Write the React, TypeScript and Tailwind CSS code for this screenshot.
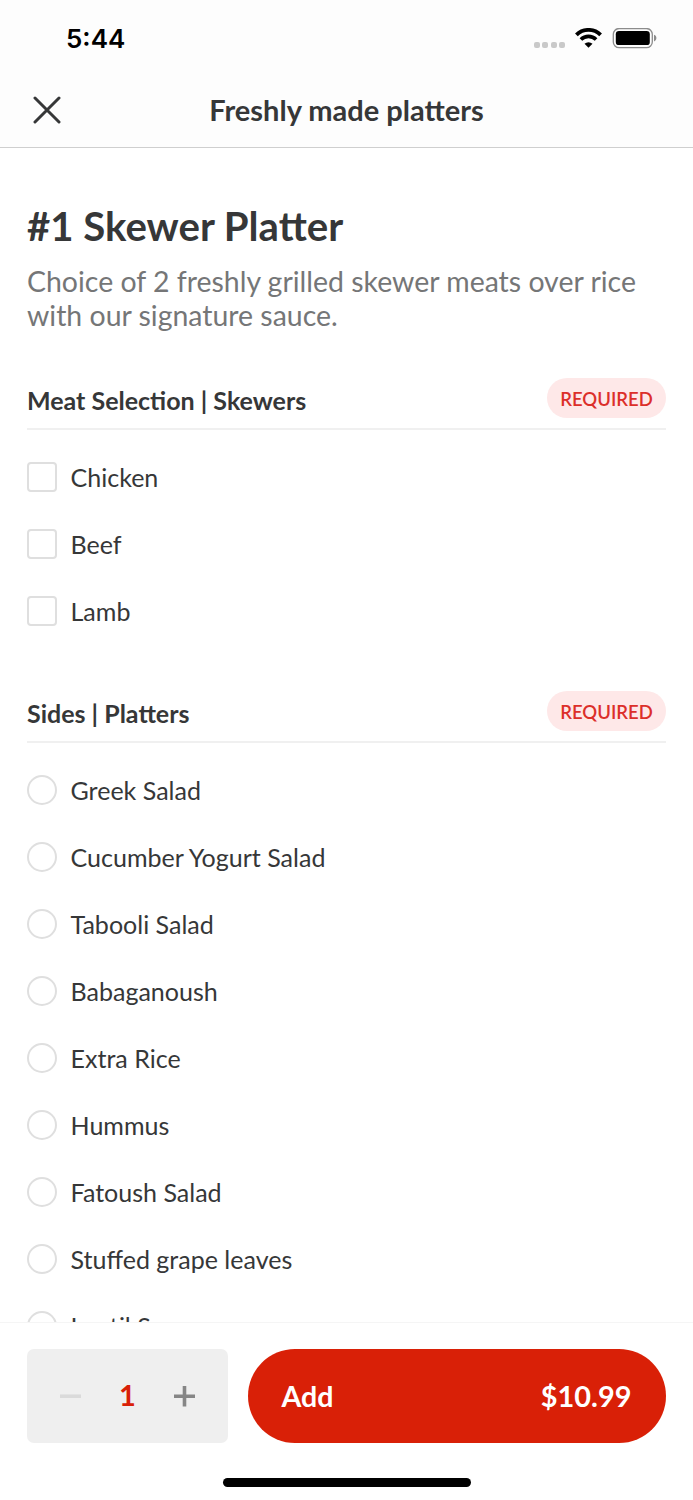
import React from "react";

const meats = ["Chicken", "Beef", "Lamb"];
const sides = [
  "Greek Salad",
  "Cucumber Yogurt Salad",
  "Tabooli Salad",
  "Babaganoush",
  "Extra Rice",
  "Hummus",
  "Fatoush Salad",
  "Stuffed grape leaves",
  "Lentil Soup",
];

function StatusBar() {
  return (
    <div className="flex h-[76px] items-center justify-between pr-[36px] pl-[66px]">
      <span className="mt-[2px] font-['Inter',sans-serif] text-[26px] leading-none font-semibold text-black">5:44</span>
      <div className="flex items-center">
        <div className="mt-[14px] mr-[10px] flex gap-[2.4px]">
          {[0, 1, 2, 3].map((i) => (
            <span key={i} className="size-[6px] rounded-[2px] bg-[#c9c9c9]" />
          ))}
        </div>
        <svg className="mr-[10px] h-[20px] w-[27px]" viewBox="0 0 27 20" fill="none">
          <path d="M1.4 6.8A17.4 17.4 0 0 1 25.6 6.8" stroke="#000" strokeWidth="3.9" />
          <path d="M5.9 11.5A10.9 10.9 0 0 1 21.1 11.5" stroke="#000" strokeWidth="3.7" />
          <path d="M13.5 19.7L9.5 15.7A6 6 0 0 1 17.5 15.7Z" fill="#000" />
        </svg>
        <svg className="h-[21px] w-[45px]" viewBox="0 0 45 21" fill="none">
          <rect x="1.3" y="0.5" width="39" height="19.2" rx="5.8" stroke="#8c8c8c" strokeWidth="1.3" />
          <rect x="3.8" y="3.1" width="34" height="14" rx="3.2" fill="#000" />
          <path d="M42 6.8C45.2 8 45.2 12.2 42 13.4Z" fill="#8c8c8c" />
        </svg>
      </div>
    </div>
  );
}

function SectionHeader({ title }: { title: string }) {
  return (
    <div className="flex h-[52px] items-start justify-between border-b-2 border-[#f0f0f0]">
      <h2 className="mt-[6.5px] text-[25px] leading-[30px] font-bold">{title}</h2>
      <span className="flex h-[40px] w-[119px] items-center justify-center rounded-full bg-[#fee8e8] pt-[2.4px] text-[18.5px] font-semibold text-[#dc2f2a]">
        REQUIRED
      </span>
    </div>
  );
}

function Option({ label, round }: { label: string; round?: boolean }) {
  return (
    <label className="flex h-[66.95px] shrink-0 items-center">
      <span className={`size-[30px] border-2 border-[#dfdfdf] bg-white ${round ? "rounded-full" : "rounded-[4px]"}`} />
      <span className="ml-[13.5px] text-[25.04px] leading-[30px]">{label}</span>
    </label>
  );
}

export default function App() {
  return (
    <div className="flex h-[1500px] w-[693px] flex-col overflow-hidden bg-white font-['Lato',sans-serif] text-[#363738]">
      <header className="h-[148px] shrink-0 border-b border-[#cfcfcf] bg-[#fdfdfd]">
        <StatusBar />
        <div className="grid h-[68px] grid-cols-[60px_1fr_60px] items-center px-[33px]">
          <svg className="size-[28px]" viewBox="0 0 28 28" fill="none" stroke="#363738" strokeWidth="3" strokeLinecap="round">
            <path d="M2 2L26 26M26 2L2 26" />
          </svg>
          <h1 className="text-center text-[29px] leading-[34px] font-bold">Freshly made platters</h1>
        </div>
      </header>

      <main className="flex min-h-0 flex-1 flex-col overflow-hidden px-[27px]">
        <h2 className="mt-[54px] text-[40.15px] leading-[48px] font-bold">#1 Skewer Platter</h2>
        <p className="mt-[14px] text-[28.44px] leading-[34px] text-[#757677]">
          Choice of 2 freshly grilled skewer meats over rice with our signature sauce.
        </p>
        <section className="mt-[46.4px] shrink-0">
          <SectionHeader title="Meat Selection | Skewers" />
          <div className="pt-[13.5px]">
            {meats.map((m) => (
              <Option key={m} label={m} />
            ))}
          </div>
        </section>
        <section className="mt-[46.6px] shrink-0">
          <SectionHeader title="Sides | Platters" />
          <div className="pt-[13.6px]">
            {sides.map((s) => (
              <Option key={s} label={s} round />
            ))}
          </div>
        </section>
      </main>

      <footer className="flex h-[178px] shrink-0 flex-col items-center border-t border-[#f5f5f5] bg-white px-[27px] pt-[26px]">
        <div className="flex w-full gap-[20px]">
          <div className="flex h-[94px] w-[201px] items-center justify-between rounded-[7px] bg-[#efefef] px-[33px]">
            <svg className="size-[21px]" viewBox="0 0 21 21">
              <path d="M0 10.2H21" stroke="#dadada" strokeWidth="3.6" />
            </svg>
            <span className="mb-[2px] text-[29px] leading-[34px] font-bold text-[#d92007]">1</span>
            <svg className="size-[21px]" viewBox="0 0 21 21">
              <path d="M0 10.2H21M10.5 0V20.4" stroke="#868686" strokeWidth="3.6" />
            </svg>
          </div>
          <button className="flex h-[94px] flex-1 items-center justify-between rounded-full bg-[#d92007] pr-[34.5px] pl-[33.5px] text-[28.6px] leading-[34px] font-bold text-white">
            <span>Add</span>
            <span className="text-[28.9px]">$10.99</span>
          </button>
        </div>
        <div className="mt-[35px] h-[9px] w-[248px] rounded-full bg-black" />
      </footer>
    </div>
  );
}
